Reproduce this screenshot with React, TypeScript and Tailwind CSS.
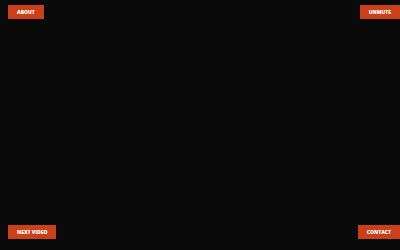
const btn =
  'flex h-[14px] items-center bg-[#c9401a] px-[9px] text-[5px] font-extrabold uppercase leading-none text-white';

export default function App() {
  return (
    <div className="flex h-[250px] w-[400px] flex-col justify-between bg-[#0a0a0a] pb-[11px] pl-[8px] pt-[5px] font-['Open_Sans',sans-serif]">
      <div className="flex justify-between">
        <button className={btn}>About</button>
        <button className={btn}>Unmute</button>
      </div>
      <div className="flex justify-between">
        <button className={btn}>Next Video</button>
        <button className={btn}>Contact</button>
      </div>
    </div>
  );
}
